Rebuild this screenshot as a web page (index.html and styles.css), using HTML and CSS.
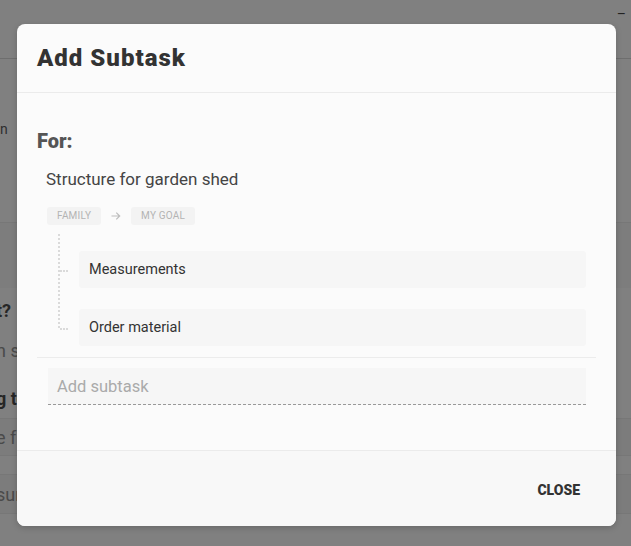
FILE: index.html
```html
<!DOCTYPE html>
<html lang="en">
<head>
<meta charset="utf-8">
<title>Add Subtask</title>
<link rel="stylesheet" href="styles.css">
</head>
<body>
<div class="page">
  <div class="page-top"><span class="page-dash">–</span></div>
  <div class="page-section"><span class="bg-text">n</span></div>
  <div class="page-band"></div>
  <div class="page-row r1 strong"><span>t?</span></div>
  <div class="page-row r2 light"><span>n sp</span></div>
  <div class="page-row r3 strong"><span>g to</span></div>
  <div class="page-row r4 band light"><span>e f</span></div>
  <div class="page-row r5 band light"><span>sure</span></div>
</div>

<div class="overlay">
  <div class="modal">
    <div class="modal-header">
      <h1 class="modal-title">Add Subtask</h1>
    </div>
    <div class="modal-body">
      <h2 class="for-label">For:</h2>
      <div class="parent-title">Structure for garden shed</div>
      <div class="crumbs">
        <span class="chip">Family</span>
        <svg class="crumb-arrow" width="10" height="10" viewBox="0 0 10 10"><path d="M0.5 5h8M5.3 1.6 8.7 5 5.3 8.4" fill="none" stroke="#bdbdbd" stroke-width="1.2"/></svg>
        <span class="chip">My Goal</span>
      </div>
      <div class="tree">
        <div class="tree-item"><div class="subtask">Measurements</div></div>
        <div class="tree-item"><div class="subtask">Order material</div></div>
      </div>
      <div class="add-row">
        <div class="add-input">Add subtask</div>
      </div>
    </div>
    <div class="modal-footer">
      <button class="close-btn">Close</button>
    </div>
  </div>
</div>
</body>
</html>
```
FILE: styles.css
```css
html, body {
  margin: 0;
  padding: 0;
}
body {
  width: 631px;
  height: 546px;
  overflow: hidden;
  background: #808080;
  font-family: Roboto, "Liberation Sans", sans-serif;
  position: relative;
}
.page {
  display: flex;
  flex-direction: column;
  color: #333;
}
.page-top {
  height: 58px;
  border-bottom: 1px solid #6e6e6e;
  display: flex;
  justify-content: flex-end;
}
.page-dash {
  color: #222;
  font-size: 14px;
  margin: 6px 5px 0 0;
}
.page-section {
  height: 164px;
  border-bottom: 1px solid #777;
  padding: 62px 0 0 0;
  box-sizing: border-box;
  font-size: 14px;
}
.bg-text { color: #2e2e2e; }
.page-band {
  height: 65px;
  background: #7d7d7d;
}
.page-row {
  display: flex;
  align-items: center;
  font-size: 18px;
  overflow: hidden;
}
.page-row span { margin-left: -4px; white-space: nowrap; }
.page-row.strong { font-weight: 700; color: #262626; }
.page-row.light { color: #4a4a4a; }
.r1 { height: 44px; }
.r2 { height: 36px; }
.r3 { height: 40px; margin-top: 10px; }
.r4 { height: 36px; }
.r5 { height: 38px; margin-top: 18px; }
.page-row.band { background: #7c7c7c; border-top: 1px solid #777; border-bottom: 1px solid #777; }

.overlay {
  position: absolute;
  inset: 0;
  padding: 24px 15px 20px 17px;
  box-sizing: border-box;
}
.modal {
  width: 599px;
  height: 502px;
  background: #fbfbfb;
  border-radius: 8px;
  box-shadow: 0 2px 6px rgba(0,0,0,0.18);
  display: flex;
  flex-direction: column;
  overflow: hidden;
}
.modal-header {
  padding: 0 20px;
  height: 68px;
  display: flex;
  align-items: center;
  border-bottom: 1px solid #ebebeb;
  flex-shrink: 0;
}
.modal-title {
  margin: 0;
  font-size: 24px;
  font-weight: 900;
  color: #333;
  letter-spacing: 1px;
}
.modal-body {
  flex: 1;
  padding: 36px 20px 0;
  display: flex;
  flex-direction: column;
}
.for-label {
  margin: 0;
  font-size: 20px;
  font-weight: 900;
  color: #555;
  line-height: 24px;
}
.parent-title {
  margin: 14px 0 0 9px;
  font-size: 17px;
  color: #444;
  line-height: 24px;
}
.crumbs {
  display: flex;
  align-items: center;
  margin: 16px 0 0 10px;
  gap: 10px;
}
.chip {
  background: #f3f3f3;
  color: #b3b3b3;
  font-size: 10px;
  text-transform: uppercase;
  letter-spacing: 0.2px;
  padding: 0 10px;
  height: 18px;
  line-height: 18px;
  border-radius: 3px;
}
.tree {
  margin: 9px 0 0 21px;
  padding: 17px 0 0 0;
  display: flex;
  flex-direction: column;
  gap: 21px;
  position: relative;
}
.tree::before {
  content: "";
  position: absolute;
  left: 0;
  top: 0;
  bottom: 18px;
  border-left: 2px dotted #dadada;
}
.tree-item {
  display: flex;
  align-items: center;
  position: relative;
  padding-left: 21px;
}
.tree-item::before {
  content: "";
  position: absolute;
  left: 2px;
  top: 50%;
  width: 8px;
  border-top: 2px dotted #dadada;
}
.subtask {
  flex: 1;
  margin-right: 10px;
  height: 37px;
  background: #f6f6f6;
  border-radius: 3px;
  display: flex;
  align-items: center;
  padding-left: 10px;
  font-size: 14.5px;
  color: #333;
}
.add-row {
  margin-top: 11px;
  border-top: 1px solid #ececec;
  padding: 10px 10px 0 11px;
}
.add-input {
  height: 36px;
  background: #f6f6f6;
  border-bottom: 1px dashed #999;
  display: flex;
  align-items: center;
  padding-left: 9px;
  font-size: 16.5px;
  color: #aaa;
}
.modal-footer {
  height: 75px;
  border-top: 1px solid #ebebeb;
  background: #f8f8f8;
  display: flex;
  align-items: center;
  justify-content: flex-end;
  padding: 0 36px;
  flex-shrink: 0;
}
.close-btn {
  border: 0;
  background: none;
  font-family: Roboto, "Liberation Sans", sans-serif;
  font-weight: 900;
  font-size: 14px;
  text-transform: uppercase;
  color: #333;
  padding: 0;
  margin-top: 2px;
}
```
